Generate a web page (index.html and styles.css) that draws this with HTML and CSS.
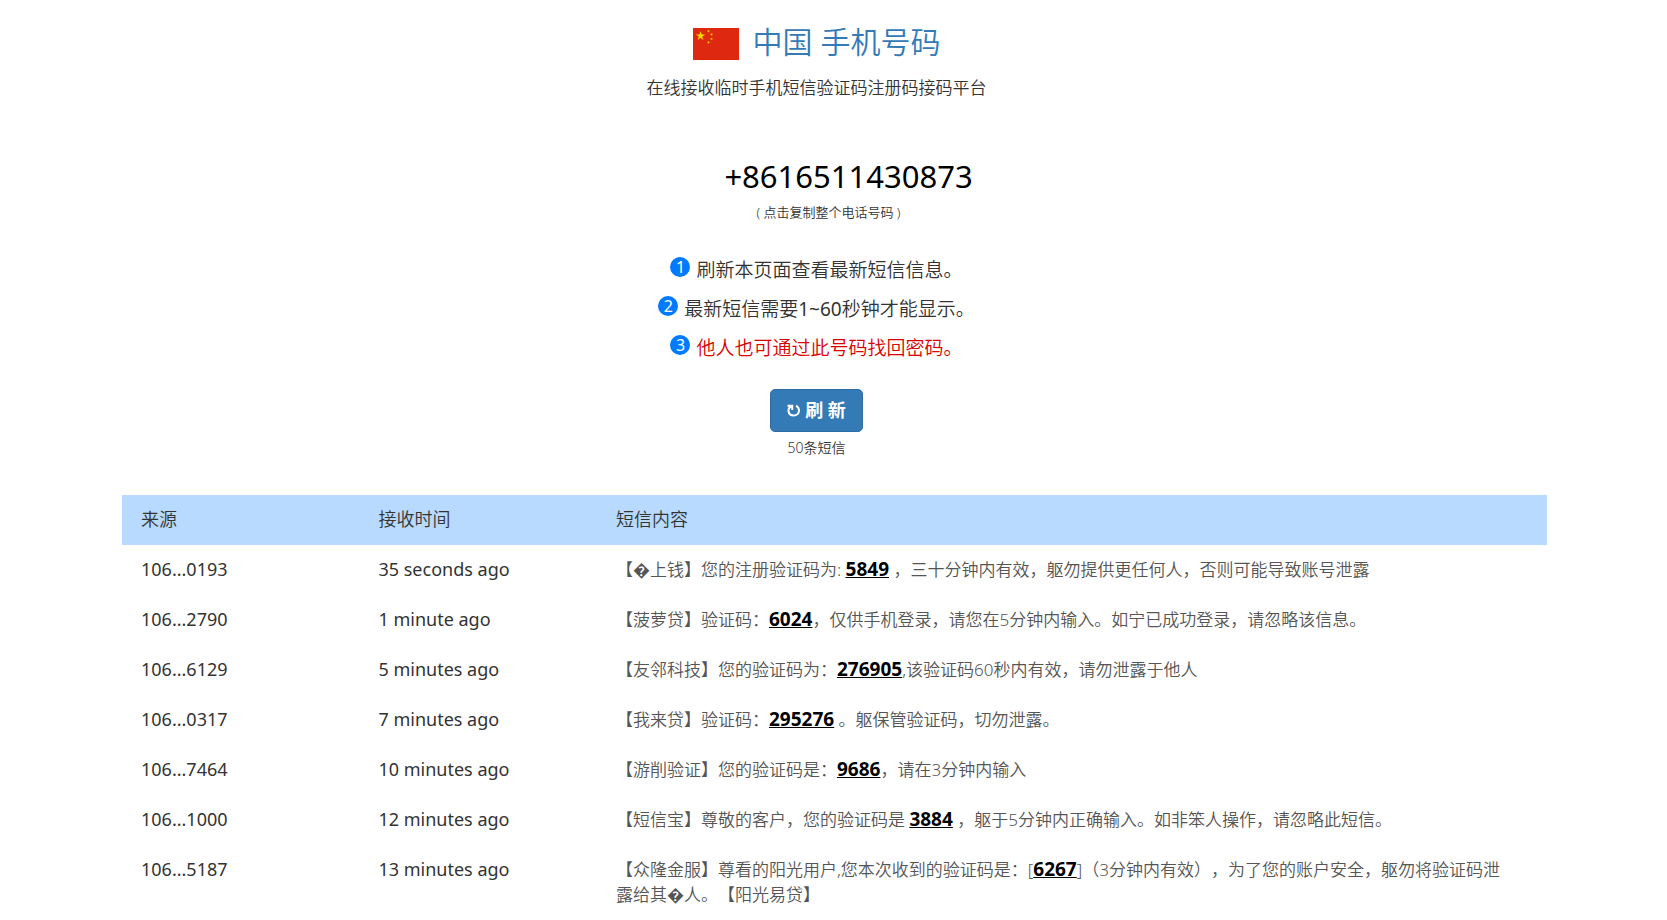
FILE: index.html
```html
<!DOCTYPE html>
<html lang="zh-CN">
<head>
<meta charset="utf-8">
<meta name="viewport" content="width=device-width, initial-scale=1">
<title>中国 手机号码</title>
<link rel="stylesheet" href="styles.css">
</head>
<body>
<main class="page">
  <header class="intro">
    <h1 class="title">
      <svg class="flag" viewBox="0 0 46 32" role="img" aria-label="中国">
        <defs><path id="star" d="M0-1 .225-.309H.951L.363.118.588.809 0 .382-.588.809-.363.118-.951-.309H-.225z"/></defs>
        <rect width="46" height="32" fill="#de2910"/>
        <g fill="#ffde00">
          <use href="#star" transform="translate(7.5 8) scale(4.8)"/>
          <use href="#star" transform="translate(15.5 3.2) rotate(24) scale(1.6)"/>
          <use href="#star" transform="translate(18.5 6.4) rotate(46) scale(1.6)"/>
          <use href="#star" transform="translate(18.5 11) scale(1.6)"/>
          <use href="#star" transform="translate(15.5 14.4) rotate(20) scale(1.6)"/>
        </g>
      </svg>
      <a class="title-link" href="#">中国 手机号码</a>
    </h1>
    <p class="subtitle">在线接收临时手机短信验证码注册码接码平台</p>
    <button class="phone" type="button">+8616511430873</button>
    <p class="copy-note">( 点击复制整个电话号码 )</p>
    <ol class="steps">
      <li class="step"><span class="badge">1</span><span>刷新本页面查看最新短信信息。</span></li>
      <li class="step"><span class="badge">2</span><span>最新短信需要<span class="range">1~60</span>秒钟才能显示。</span></li>
      <li class="step step-warning"><span class="badge">3</span><span>他人也可通过此号码找回密码。</span></li>
    </ol>
    <button class="refresh" type="button"><svg class="refresh-icon" viewBox="0 0 14 13" aria-hidden="true"><path d="M.5 1.700h4.700v4.300M4.800 2C2.400 3 1.300 4.700 1.500 7c.4 2.800 2.600 4.600 5.200 4.600 3.100 0 5.300-2.200 5.300-5C12 4.300 10.900 2.700 9 1.600" fill="none" stroke="currentColor" stroke-width="2"/></svg>刷 新</button>
    <p class="count">50条短信</p>
  </header>
  <table class="messages">
    <thead>
      <tr><th scope="col">来源</th><th scope="col">接收时间</th><th class="content" scope="col">短信内容</th></tr>
    </thead>
    <tbody>
      <tr><td>106...0193</td><td>35 seconds ago</td><td class="content">【&#xFFFD;上钱】您的注册验证码为: <b class="code">5849</b> ，三十分钟内有效，躯勿提供更任何人，否则可能导致账号泄露</td></tr>
      <tr><td>106...2790</td><td>1 minute ago</td><td class="content">【菠萝贷】验证码：<b class="code">6024</b>，仅供手机登录，请您在5分钟内输入。如宁已成功登录，请忽略该信息。</td></tr>
      <tr><td>106...6129</td><td>5 minutes ago</td><td class="content">【友邻科技】您的验证码为：<b class="code">276905</b>,该验证码60秒内有效，请勿泄露于他人</td></tr>
      <tr><td>106...0317</td><td>7 minutes ago</td><td class="content">【我来贷】验证码：<b class="code">295276</b> 。躯保管验证码，切勿泄露。</td></tr>
      <tr><td>106...7464</td><td>10 minutes ago</td><td class="content">【游削验证】您的验证码是：<b class="code">9686</b>，请在3分钟内输入</td></tr>
      <tr><td>106...1000</td><td>12 minutes ago</td><td class="content">【短信宝】尊敬的客户，您的验证码是 <b class="code">3884</b> ，躯于5分钟内正确输入。如非笨人操作，请忽略此短信。</td></tr>
      <tr><td>106...5187</td><td>13 minutes ago</td><td class="content">【众隆金服】尊看的阳光用户,您本次收到的验证码是：[<b class="code">6267</b>]（3分钟内有效），为了您的账户安全，躯勿将验证码泄露给其&#xFFFD;人。【阳光易贷】</td></tr>
    </tbody>
  </table>
</main>
</body>
</html>
```
FILE: styles.css
```css
* {
  box-sizing: border-box;
}

body {
  margin: 0;
  background: #fff;
  color: #333;
  font-family: "Noto Sans", "Noto Sans CJK SC", sans-serif;
  font-size: 17px;
  line-height: 25px;
  text-spacing-trim: space-all;
}

h1,
p,
ol {
  margin: 0;
  padding: 0;
  font-weight: 350;
}

button {
  border: 0;
  font-family: inherit;
  cursor: pointer;
}

.page {
  padding: 22px 120px 0 122px;
}

.intro {
  display: flex;
  flex-direction: column;
  align-items: center;
  padding-right: 36px;
}

.title {
  display: flex;
  align-items: flex-end;
  gap: 14px;
  font-size: 30px;
  line-height: 40px;
}

.flag {
  width: 46px;
  height: 32px;
  margin-bottom: 2px;
}

.title-link {
  color: #337ab7;
  text-decoration: none;
}

.subtitle {
  margin-top: 13px;
}

.phone {
  margin-top: 56px;
  padding: 0 0 0 64px;
  background: none;
  color: #000;
  font-size: 31px;
  line-height: 40px;
}

.copy-note {
  margin-top: 6px;
  padding-left: 24px;
  font-size: 13px;
  line-height: 20px;
}

.steps {
  margin-top: 29px;
  list-style: none;
  font-size: 19px;
  line-height: 39px;
}

.step {
  display: flex;
  justify-content: center;
  gap: 6px;
}

.step-warning {
  color: #d80000;
}

.range {
  font-weight: 400;
}

.badge {
  width: 20px;
  height: 20px;
  margin-top: 6px;
  border-radius: 50%;
  background: #007bff;
  color: #fff;
  font-size: 16px;
  font-weight: 400;
  line-height: 20px;
  text-align: center;
}

.refresh {
  display: flex;
  align-items: center;
  gap: 4px;
  margin-top: 21px;
  padding: 9px 16px;
  border: 1px solid #2e6da4;
  border-radius: 5px;
  background: #337ab7;
  color: #fff;
  font-size: 18px;
  font-weight: 700;
  line-height: 23px;
}

.refresh-icon {
  width: 14px;
  height: 13px;
}

.count {
  margin-top: 6px;
  font-size: 14px;
  line-height: 20px;
}

.messages {
  width: 100%;
  margin-top: 37px;
  border-collapse: collapse;
  table-layout: fixed;
  font-size: 18px;
}

.messages thead {
  background: #b8daff;
}

.messages th,
.messages td {
  padding: 12px 19px 13px;
  text-align: left;
  vertical-align: top;
}

.messages th {
  font-weight: 350;
}

.messages .content {
  width: 66.67%;
}

.messages td.content {
  padding-right: 42px;
  color: #555;
  font-size: 17px;
  font-weight: 350;
}

.code {
  color: #000;
  font-size: 19px;
  font-weight: 700;
  line-height: 20px;
  text-decoration: underline;
}
```
